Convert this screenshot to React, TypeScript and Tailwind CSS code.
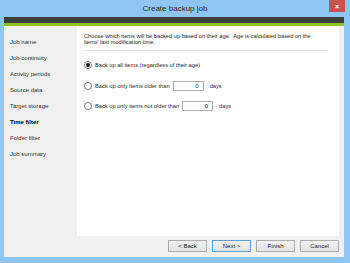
import React from "react";

const navItems = [
  "Job name",
  "Job continuity",
  "Activity periods",
  "Source data",
  "Target storage",
  "Time filter",
  "Folder filter",
  "Job summary",
];

function Radio({ checked }: { checked?: boolean }) {
  return (
    <span className="flex h-[8px] w-[8px] shrink-0 items-center justify-center rounded-full border border-[#7a7a7a] bg-white">
      {checked && <span className="h-[4px] w-[4px] rounded-full bg-[#1a1a1a]" />}
    </span>
  );
}

function DaysInput() {
  return (
    <span className="flex h-[10px] w-[31px] items-center justify-end border border-[#abadb3] bg-white pr-[4px] text-[6px] leading-none">
      0
    </span>
  );
}

function Btn({ label, primary }: { label: string; primary?: boolean }) {
  return (
    <button
      className={[
        "flex h-[12px] w-[39px] items-center justify-center border bg-gradient-to-b from-[#f2f2f2] to-[#e3e3e3] text-[6px] leading-none text-[#222]",
        primary ? "border-[#5f9fd6]" : "border-[#adadad]",
      ].join(" ")}
    >
      {label}
    </button>
  );
}

export default function App() {
  return (
    <div
      className="flex h-[263px] w-[350px] flex-col overflow-hidden bg-[#8fc5f3] text-[#1e1e1e]"
      style={{ fontFamily: '"Liberation Sans", Arial, sans-serif' }}
    >
      {/* Title bar */}
      <div className="relative flex h-[17px] shrink-0 items-center justify-center">
        <span className="text-[8px] leading-none text-[#2b2b2b]">Create backup job</span>
        <div className="absolute right-[5px] top-0 flex h-[12px] w-[16px] items-center justify-center bg-[#c9514f] text-[7px] font-bold leading-none text-white">
          ×
        </div>
      </div>

      {/* Window body */}
      <div className="ml-[4px] mr-[6px] flex flex-1 flex-col bg-[#f0f0f0]">
        <div className="h-[6px] bg-[#3d3d3d]" />
        <div className="h-[3px] bg-[#8cc21e]" />

        <div className="flex h-[210px]">
          {/* Left nav */}
          <div className="flex w-[73px] flex-col gap-[9px] pl-[6px] pt-[13px] text-[6px] leading-[7px]">
            {navItems.map((n) => (
              <div key={n} className={n === "Time filter" ? "font-bold text-black" : "text-[#333]"}>
                {n}
              </div>
            ))}
          </div>

          {/* Content */}
          <div className="mr-[5px] flex-1 bg-white px-[7px] pt-[7px] text-[5.7px] leading-[6px]">
            <div className="whitespace-nowrap">
              <p>Choose which items will be backed up based on their age.&nbsp; Age is calculated based on the</p>
              <p>items' last modification time.</p>
            </div>
            <div className="mt-[5px] mr-[4px] h-px bg-[#e3e3e3]" />

            <div className="mt-[10px] flex items-center gap-[3px]">
              <Radio checked />
              <span>Back up all items (regardless of their age)</span>
            </div>
            <div className="mt-[12px] flex items-center gap-[3px]">
              <Radio />
              <span>Back up only items older than</span>
              <DaysInput />
              <span className="ml-[3px]">days</span>
            </div>
            <div className="mt-[10px] flex items-center gap-[3px]">
              <Radio />
              <span>Back up only items not older than</span>
              <DaysInput />
              <span className="ml-[3px]">days</span>
            </div>
          </div>
        </div>

        {/* Footer buttons */}
        <div className="flex flex-1 items-start justify-end gap-[5px] pr-[5px] pt-[4px]">
          <Btn label="< Back" />
          <Btn label="Next >" primary />
          <Btn label="Finish" />
          <Btn label="Cancel" />
        </div>
      </div>
      <div className="h-[6px] shrink-0" />
    </div>
  );
}
